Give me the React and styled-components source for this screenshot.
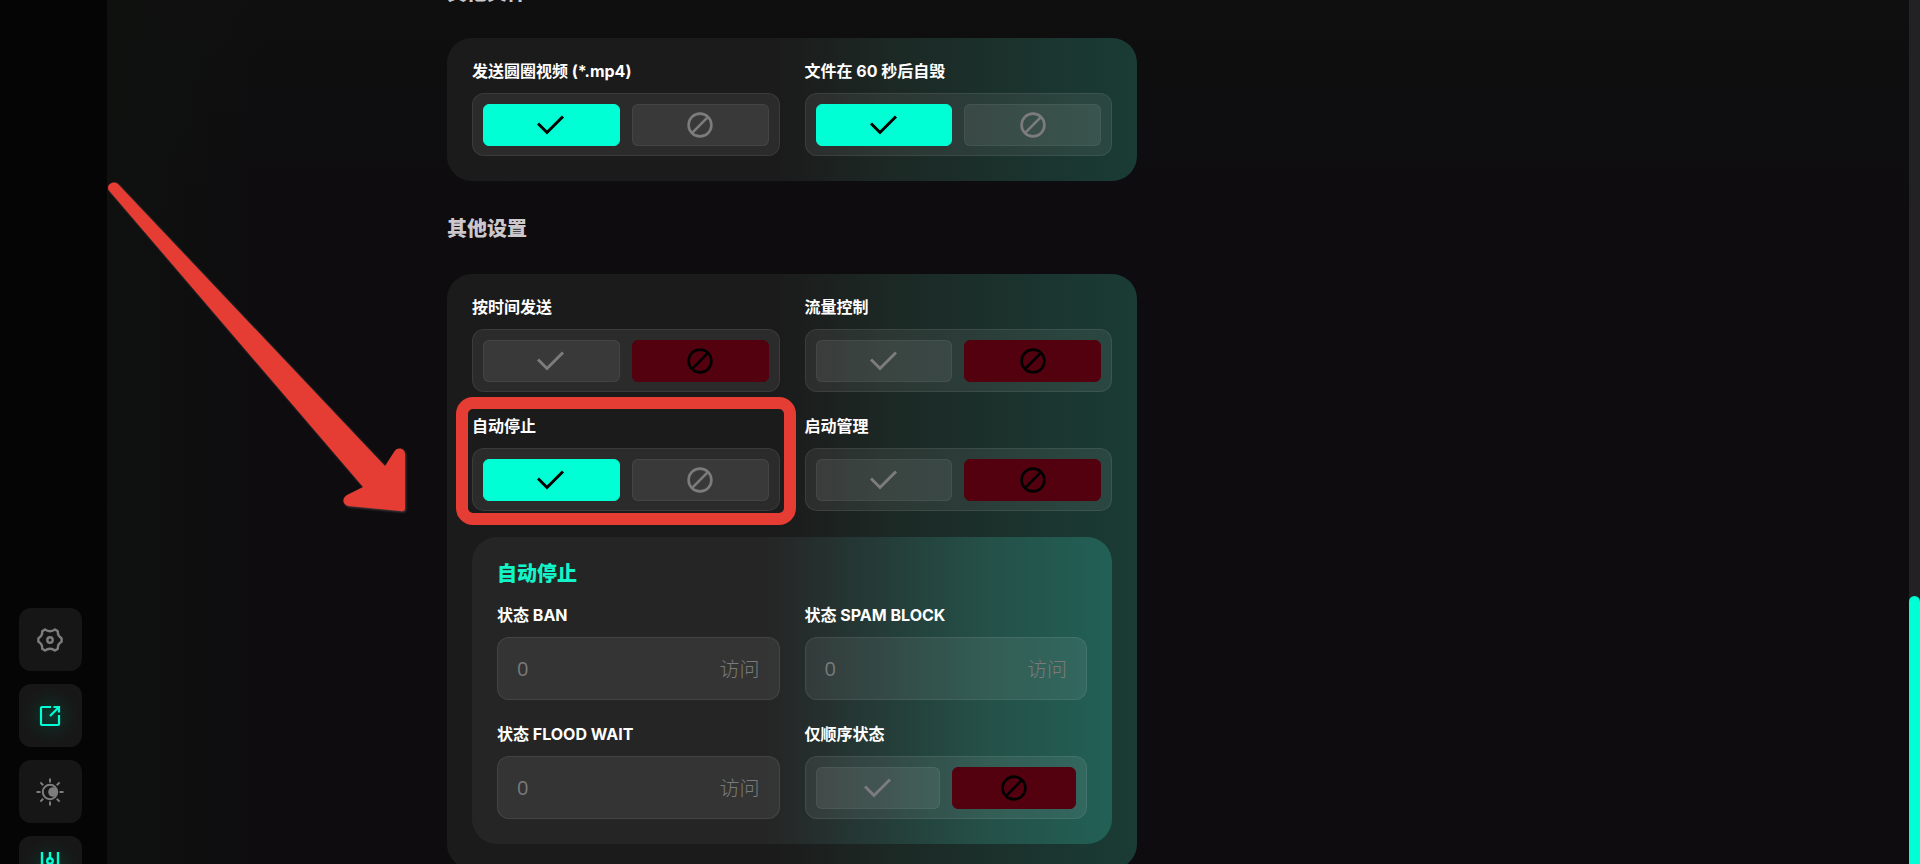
import React, { useState } from "react";
import styled, { createGlobalStyle } from "styled-components";

const GlobalStyle = createGlobalStyle`
  * {
    box-sizing: border-box;
  }
  html, body {
    margin: 0;
    height: 100%;
    overflow: hidden;
    background: #0e0c0f;
  }
  body, button, input {
    font-family: "Open Sans", "Noto Sans CJK SC", sans-serif;
  }
`;

const Page = styled.div`
  display: flex;
  height: 100vh;
  overflow: hidden;
  background:
    linear-gradient(90deg, #0f110f 5%, rgba(15, 17, 15, 0) 14%),
    linear-gradient(180deg, #0f0f0f 0, #0e0c0f 220px);
`;

const Sidebar = styled.nav`
  flex: 0 0 107px;
  display: flex;
  flex-direction: column;
  gap: 13px;
  padding: 608px 0 0 19px;
  background: #050505;
`;

const NavButton = styled.button`
  flex: none;
  display: flex;
  align-items: center;
  justify-content: center;
  width: 63px;
  height: 63px;
  padding: 0 2px 0 0;
  border: 0;
  border-radius: 12px;
  background: ${({ $on }) =>
    $on ? "radial-gradient(circle, #0c3a2f 0%, #14201d 35%, #171717 62%)" : "#161616"};
  color: ${({ $on }) => ($on ? "#00ffd5" : "#7d7d7d")};
`;

const Content = styled.main`
  flex: 1;
  min-width: 0;
  display: flex;
  flex-direction: column;
  align-items: center;
  overflow: hidden;
`;

const Column = styled.div`
  width: 690px;
  margin: -55px 672px 0 240px;
`;

const SectionTitle = styled.h2`
  margin: 0;
  padding: 36px 0 34px;
  font-size: 20px;
  line-height: 23px;
  font-weight: 900;
  color: #cbc8cd;
`;

const Card = styled.section`
  padding: 25px;
  border-radius: 25px;
  background: linear-gradient(90deg, #1b1b1b 0%, #1b1b1b 48%, #1c2824 64%, #1a3c35 100%);
`;

const Grid = styled.div`
  display: grid;
  grid-template-columns: repeat(2, minmax(0, 1fr));
  gap: 26px 25px;
`;

const Panel = styled.section`
  grid-column: 1 / -1;
  padding: 25px;
  border-radius: 25px;
  background: linear-gradient(90deg, #252525 0%, #252525 46%, #245048 80%, #226055 100%);
`;

const PanelTitle = styled.h3`
  margin: 0 0 21px;
  font-size: 20px;
  line-height: 24px;
  font-weight: 900;
  color: #11f5c9;
`;

const Field = styled.div`
  display: flex;
  flex-direction: column;
  gap: 14px;
`;

const Label = styled.label`
  font-family: Inter, "Noto Sans CJK SC", sans-serif;
  font-size: 16px;
  line-height: 16px;
  font-weight: 700;
  color: #fff;
`;

const Switcher = styled.div`
  display: grid;
  grid-template-columns: 1fr 1fr;
  gap: 12px;
  height: 63px;
  padding: 10px 10px 9px;
  border: 1px solid rgba(255, 255, 255, 0.08);
  border-radius: 12px;
  background: rgba(255, 255, 255, 0.07);
`;

const fills = {
  yes: "#00ffd5",
  no: "#53000f",
};

const Option = styled.button`
  display: flex;
  align-items: center;
  justify-content: center;
  padding: 0;
  border: 1px solid ${({ $fill }) => fills[$fill] || "rgba(255, 255, 255, 0.06)"};
  border-radius: 6px;
  background: ${({ $fill }) => fills[$fill] || "rgba(255, 255, 255, 0.07)"};
  color: ${({ $fill }) => ($fill ? "#000" : "#7c7c7c")};
`;

const InputBox = styled.div`
  display: flex;
  align-items: center;
  height: 63px;
  padding: 0 19px;
  border: 1px solid rgba(255, 255, 255, 0.08);
  border-radius: 12px;
  background: rgba(255, 255, 255, 0.07);
  font-size: 20px;
  color: #7a7a7a;
`;

const Input = styled.input`
  flex: 1;
  min-width: 0;
  padding: 0;
  border: 0;
  outline: 0;
  background: none;
  font-size: 20px;
  color: #7a7a7a;

  &::placeholder {
    color: #7a7a7a;
    opacity: 1;
  }
`;

const Suffix = styled.span`
  font-weight: 300;
`;

const Scrollbar = styled.div`
  flex: 0 0 11px;
  display: flex;
  flex-direction: column;
  justify-content: flex-end;
  background: #222124;
`;

const Thumb = styled.div`
  height: 31%;
  border-radius: 6px 6px 0 0;
  background: #00ffd5;
`;

// frame drawn over the highlighted field
const Marked = styled.div`
  position: relative;

  &::after {
    content: "";
    position: absolute;
    inset: -21px -16px -14px -16px;
    border: 12px solid #e53c33;
    border-radius: 17px;
    pointer-events: none;
  }
`;

const Arrow = styled.svg`
  position: absolute;
  left: 107px;
  top: 181px;
  filter: drop-shadow(1px 1px 1px rgba(140, 120, 120, 0.5));
  pointer-events: none;
`;

const CheckIcon = () => (
  <svg width="28" height="20" viewBox="0 0 28 20" fill="none" stroke="currentColor" strokeWidth="3">
    <path d="M1 8.5L10 17.5L26 1.5" />
  </svg>
);

const BanIcon = () => (
  <svg width="26" height="26" viewBox="0 0 26 26" fill="none" stroke="currentColor" strokeWidth="2.6">
    <circle cx="13" cy="13" r="11.4" />
    <path d="M5.2 20.8L20.8 5.2" />
  </svg>
);

const GearIcon = () => (
  <svg width="26" height="26" viewBox="0 0 26 26" fill="none" stroke="currentColor" strokeWidth="2.4" strokeLinejoin="round">
    <path d="M5.2 4.2L8 2.4Q10.2 4.2 13 4.2Q15.8 4.2 18 2.4L20.8 4.2Q20.4 9 24.6 11.2V14.8Q20.4 17 20.8 21.8L18 23.6Q15.8 21.8 13 21.8Q10.2 21.8 8 23.6L5.2 21.8Q5.6 17 1.4 14.8V11.2Q5.6 9 5.2 4.2Z" />
    <circle cx="13" cy="13" r="2.7" />
  </svg>
);

const ShareIcon = () => (
  <svg width="22" height="22" viewBox="0 0 22 22" fill="none" stroke="currentColor" strokeWidth="2.2">
    <path d="M12 2H3Q2 2 2 3V19Q2 20 3 20H19Q20 20 20 19V10" />
    <path d="M11 11L20 2M14.5 2H20V7.5" />
  </svg>
);

const ThemeIcon = () => (
  <svg width="28" height="28" viewBox="0 0 28 28" fill="none" stroke="currentColor" strokeWidth="2">
    <circle cx="14" cy="14" r="7.2" />
    <circle cx="17" cy="14" r="4.8" fill="currentColor" stroke="none" />
    <path d="M14 0.5V4.5M14 23.5V27.5M0.5 14H4.5M23.5 14H27.5M4.4 4.4L7.2 7.2M20.8 20.8L23.6 23.6M4.4 23.6L7.2 20.8M20.8 7.2L23.6 4.4" />
  </svg>
);

const SlidersIcon = () => (
  <svg width="20" height="32" viewBox="0 0 20 32" fill="none" stroke="currentColor" strokeWidth="2.4">
    <path d="M2 0V18M10 0V6M10 12V32M18 0V18M2 24V32M18 24V32" />
    <circle cx="10" cy="9" r="2.8" />
    <circle cx="2" cy="21" r="2" />
    <circle cx="18" cy="21" r="2" />
  </svg>
);

const navItems = [
  { id: "settings", title: "设置", icon: <GearIcon /> },
  { id: "export", title: "导出", icon: <ShareIcon />, on: true },
  { id: "theme", title: "主题", icon: <ThemeIcon /> },
  { id: "options", title: "选项", icon: <SlidersIcon />, on: true },
];

const Toggle = ({ id, text, initial }) => {
  const [value, setValue] = useState(initial);

  return (
    <Field>
      <Label id={id} as="span">{text}</Label>
      <Switcher role="group" aria-labelledby={id}>
        <Option aria-pressed={value} aria-label="是" $fill={value ? "yes" : ""} onClick={() => setValue(true)}>
          <CheckIcon />
        </Option>
        <Option aria-pressed={!value} aria-label="否" $fill={value ? "" : "no"} onClick={() => setValue(false)}>
          <BanIcon />
        </Option>
      </Switcher>
    </Field>
  );
};

const Count = ({ id, text }) => (
  <Field>
    <Label htmlFor={id}>{text}</Label>
    <InputBox>
      <Input id={id} placeholder="0" />
      <Suffix>访问</Suffix>
    </InputBox>
  </Field>
);

const App = () => (
  <>
    <GlobalStyle />
    <Page>
      <Sidebar>
        {navItems.map(i => (
          <NavButton key={i.id} aria-label={i.title} $on={i.on}>{i.icon}</NavButton>
        ))}
      </Sidebar>
      <Content>
        <Column>
          <SectionTitle>其他文件</SectionTitle>
          <Card>
            <Grid>
              <Toggle id="round" text="发送圆圈视频 (*.mp4)" initial={true} />
              <Toggle id="destroy" text="文件在 60 秒后自毁" initial={true} />
            </Grid>
          </Card>
          <SectionTitle>其他设置</SectionTitle>
          <Card>
            <Grid>
              <Toggle id="timed" text="按时间发送" initial={false} />
              <Toggle id="flow" text="流量控制" initial={false} />
              <Marked>
                <Toggle id="autostop" text="自动停止" initial={true} />
              </Marked>
              <Toggle id="launch" text="启动管理" initial={false} />
              <Panel>
                <PanelTitle>自动停止</PanelTitle>
                <Grid>
                  <Count id="ban" text="状态 BAN" />
                  <Count id="spam" text="状态 SPAM BLOCK" />
                  <Count id="flood" text="状态 FLOOD WAIT" />
                  <Toggle id="order" text="仅顺序状态" initial={false} />
                </Grid>
              </Panel>
            </Grid>
          </Card>
        </Column>
      </Content>
      <Scrollbar>
        <Thumb />
      </Scrollbar>
    </Page>
    <Arrow width="300" height="334" viewBox="0 0 300 334" fill="#e53c33">
      <path d="M1.5 9C-1 4 6 -1 11 3L278 285L287 271C290 265 298 267 298 273V327Q298 331 293 330L241 325C235 323 235 317 240 314L256 306Z" />
    </Arrow>
  </>
);

export default App;
